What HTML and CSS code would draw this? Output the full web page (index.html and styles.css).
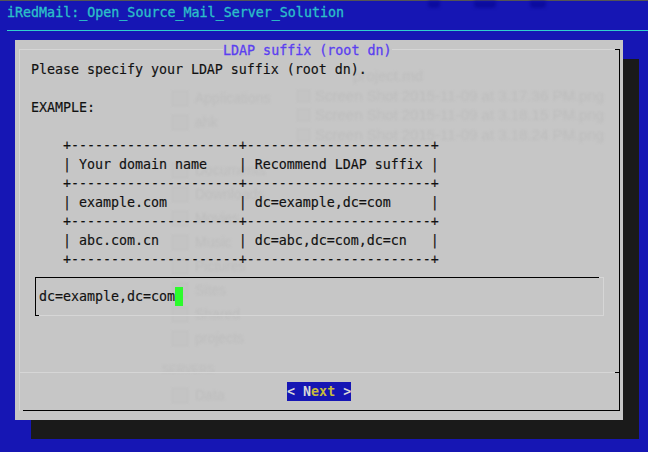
FILE: index.html
```html
<!DOCTYPE html>
<html lang="en">
<head>
<meta charset="utf-8">
<title>LDAP suffix</title>
<link rel="stylesheet" href="styles.css">
</head>
<body>
<main class="screen">
  <div class="blobs"><span class="blob b1"></span><span class="blob b2"></span><span class="blob b3"></span></div>
  <header class="backtitle">iRedMail:_Open_Source_Mail_Server_Solution</header>
  <hr class="rule">

  <section class="dialog">
    <div class="ghost">
      <ul class="ghost-side">
        <li><i></i>Applications</li>
        <li><i></i>ahk</li>
        <li></li>
        <li><i></i>Documents</li>
        <li><i></i>Downloads</li>
        <li><i></i>Movies</li>
        <li><i></i>Music</li>
        <li><i></i>Pictures</li>
        <li><i></i>Sites</li>
        <li><i></i>Shared</li>
        <li><i></i>projects</li>
        <li class="ghost-head">SERVERS</li>
        <li><i></i>Data</li>
      </ul>
      <p class="ghost-note">project.md</p>
      <ul class="ghost-files">
        <li><i></i>Screen Shot 2015-11-09 at 3.17.36 PM.png</li>
        <li><i></i>Screen Shot 2015-11-09 at 3.18.15 PM.png</li>
        <li><i></i>Screen Shot 2015-11-09 at 3.18.24 PM.png</li>
      </ul>
    </div>
    <div class="frame">
      <h1 class="title">LDAP suffix (root dn)</h1>
      <pre class="message">Please specify your LDAP suffix (root dn).

EXAMPLE:

    +---------------------+-----------------------+
    | Your domain name    | Recommend LDAP suffix |
    +---------------------+-----------------------+
    | example.com         | dc=example,dc=com     |
    +---------------------+-----------------------+
    | abc.com.cn          | dc=abc,dc=com,dc=cn   |
    +---------------------+-----------------------+</pre>
      <div class="input"><span class="value">dc=example,dc=com</span><span class="cursor"></span></div>
      <div class="actions">
        <button class="next" type="button">&lt; <span class="hot">N</span><span class="key">ext</span> &gt;</button>
      </div>
    </div>
  </section>
</main>
</body>
</html>
```

FILE: styles.css
```css
* { box-sizing: border-box; }
html, body { margin: 0; height: 100%; }
body { background: #1616b4; overflow: hidden; }

.screen {
  position: relative;
  width: 648px;
  height: 452px;
  background: #1616b4;
  border-top: 1px solid #555;
  font: 13.33px/19px "DejaVu Sans Mono", monospace;
  letter-spacing: -0.03px;
}

/* blurred window showing through the translucent terminal */
.blobs { position: absolute; left: 0; top: 0; width: 100%; height: 8px; filter: blur(1.5px); }
.blob { position: absolute; top: 0; height: 7px; background: #0c0c9e; border-radius: 0 0 4px 4px; }
.b1 { left: 428px; width: 12px; }
.b2 { left: 474px; width: 22px; }
.b3 { left: 530px; width: 16px; }

.backtitle {
  position: relative;
  height: 21px;
  padding: 2px 0 0 7px;
  color: #2cc0c8;
  letter-spacing: 0;
  -webkit-text-stroke: 0.3px #2cc0c8;
  white-space: pre;
}
.rule {
  position: relative;
  margin: 8px 0 0 7px;
  border: 0;
  height: 1px;
  background: #30cfcf;
}
.dialog {
  position: absolute;
  left: 15px;
  top: 39px;
  width: 608px;
  height: 380px;
  padding: 9px 3px 9px 4px;
  background: #c6c6c6;
  box-shadow: 16px 19px 0 #1a1a1a;
}

.ghost {
  position: absolute;
  inset: 0;
  overflow: hidden;
  color: #bdbdbd;
  font: 14px/24px "Liberation Sans", sans-serif;
  letter-spacing: 0;
  filter: blur(1px);
}
.ghost ul { list-style: none; margin: 0; padding: 0; position: absolute; }
.ghost li { display: flex; align-items: center; white-space: pre; }
.ghost i { flex: none; border: 1px solid #bfbfbf; background: #c4c4c4; }
.ghost-side { left: 157px; top: 46px; }
.ghost-side li { height: 24px; }
.ghost-side i { width: 16px; height: 15px; margin-right: 7px; }
.ghost-side .ghost-head { height: 33px; margin-left: -10px; font-size: 11px; padding-top: 4px; }
.ghost-note { position: absolute; left: 338px; top: 24px; margin: 0; font-size: 15px; }
.ghost-files { left: 282px; top: 46px; font-size: 15px; }
.ghost-files li { height: 19.5px; }
.ghost-files i { width: 13px; height: 12px; margin-right: 5px; }

.frame {
  position: relative;
  height: 100%;
  display: flex;
  flex-direction: column;
  border-style: solid;
  border-width: 1px;
  border-color: #d6d6d6 #000 transparent #d6d6d6;
}
.frame::before {
  content: "";
  position: absolute;
  right: -1px;
  top: -1px;
  width: 5px;
  height: 1px;
  background: #000;
}
.frame::after {
  content: "";
  position: absolute;
  left: 3px;
  right: -1px;
  bottom: -1px;
  height: 1px;
  background: #000;
}
.title {
  margin: -9px 0 0 203px;
  align-self: flex-start;
  height: 19px;
  background: #c6c6c6;
  color: #5a3ff0;
  font: inherit;
  letter-spacing: 0;
  -webkit-text-stroke: 0.3px #5a3ff0;
  white-space: pre;
}
.message {
  margin: 0;
  padding-left: 11px;
  color: #111;
  font: inherit;
  -webkit-text-stroke: 0.15px #111;
}
.input {
  position: relative;
  display: flex;
  align-items: center;
  height: 39px;
  margin: 8px 15px 0 15px;
  padding-left: 3px;
  border-style: solid;
  border-width: 1px;
  border-color: #000 #d6d6d6 #d6d6d6 #000;
  color: #111;
  -webkit-text-stroke: 0.15px #111;
}
.input::before {
  content: "";
  position: absolute;
  right: -1px;
  top: -1px;
  width: 5px;
  height: 1px;
  background: #d6d6d6;
}
.input::after {
  content: "";
  position: absolute;
  left: -1px;
  bottom: -1px;
  width: 4px;
  height: 1px;
  background: #000;
}
.cursor { width: 8px; height: 19px; background: #2cfb2c; }
.actions {
  position: relative;
  margin-top: auto;
  height: 38px;
  display: flex;
  justify-content: center;
  align-items: center;
  border-top: 1px solid #d6d6d6;
}
.actions::after {
  content: "";
  position: absolute;
  right: 0;
  top: -1px;
  width: 4px;
  height: 1px;
  background: #000;
}
.next {
  width: 64px;
  height: 19px;
  margin: 0 1px 0 0;
  padding: 0;
  border: 0;
  background: #1616b4;
  color: #d8d8d8;
  font: inherit;
  font-weight: 700;
  white-space: pre;
}
.hot { color: #d8d8d8; }
.key { color: #c6bb3c; }
```
